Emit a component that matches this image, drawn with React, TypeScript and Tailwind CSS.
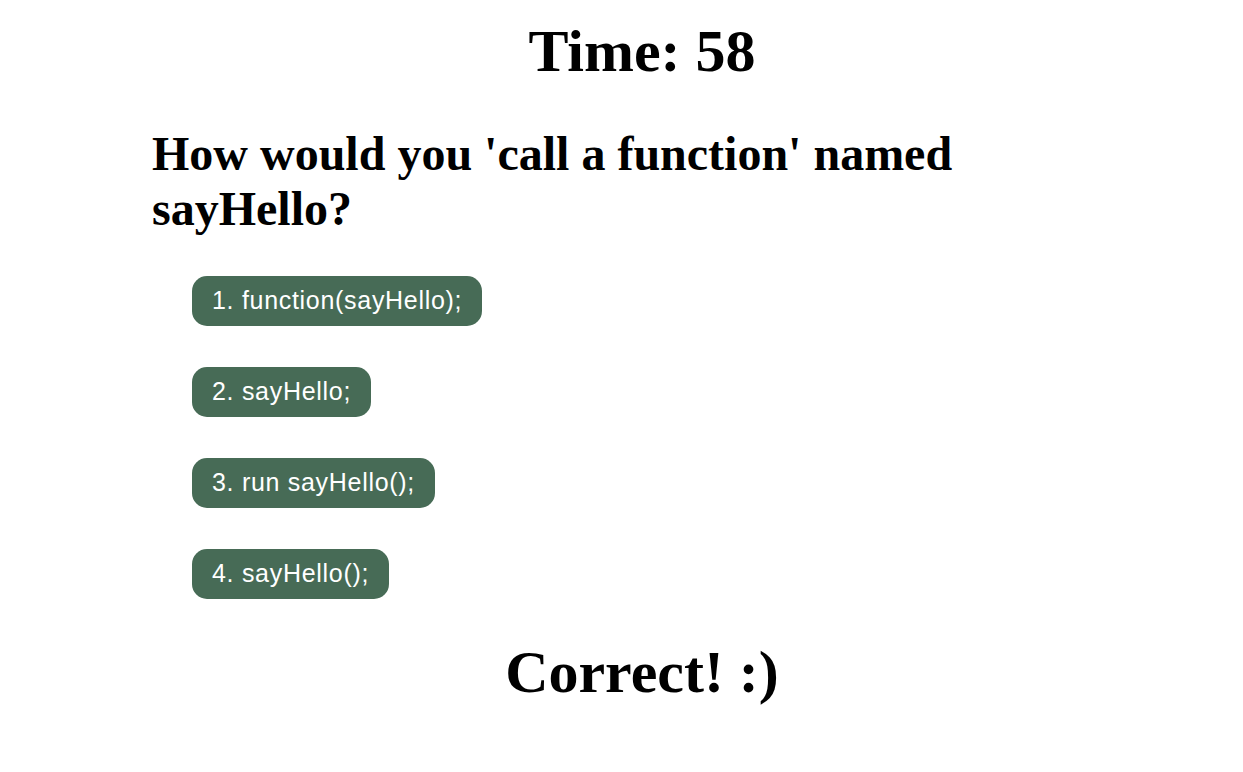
import React, { useState } from 'react';

const choices = ['function(sayHello);', 'sayHello;', 'run sayHello();', 'sayHello();'];

export default function App() {
  const [picked, setPicked] = useState<number | null>(3);

  return (
    <div className="min-h-screen bg-white text-black">
      <div className="ml-[152px] w-[980px] pt-[17px]">
        <h1 className="text-center font-['Liberation_Serif',serif] text-[60px] font-bold leading-[69px]">
          Time: 58
        </h1>

        <h2 className="mt-[40px] font-['Liberation_Serif',serif] text-[48px] font-bold leading-[55px]">
          How would you 'call a function' named sayHello?
        </h2>

        <div className="mt-[40px] flex flex-col items-start gap-[41px] pl-[40px]">
          {choices.map((c, i) => (
            <button
              key={c}
              onClick={() => setPicked(i)}
              className="h-[50px] rounded-[15px] bg-[#476b56] px-[20px] font-['Liberation_Sans',sans-serif] text-[25px] tracking-[0.7px] text-white"
            >
              {i + 1}. {c}
            </button>
          ))}
        </div>

        <h1 className="mt-[39px] text-center font-['Liberation_Serif',serif] text-[60px] font-bold leading-[69px]">
          {picked === 3 ? 'Correct! :)' : 'Wrong :('}
        </h1>
      </div>
    </div>
  );
}
